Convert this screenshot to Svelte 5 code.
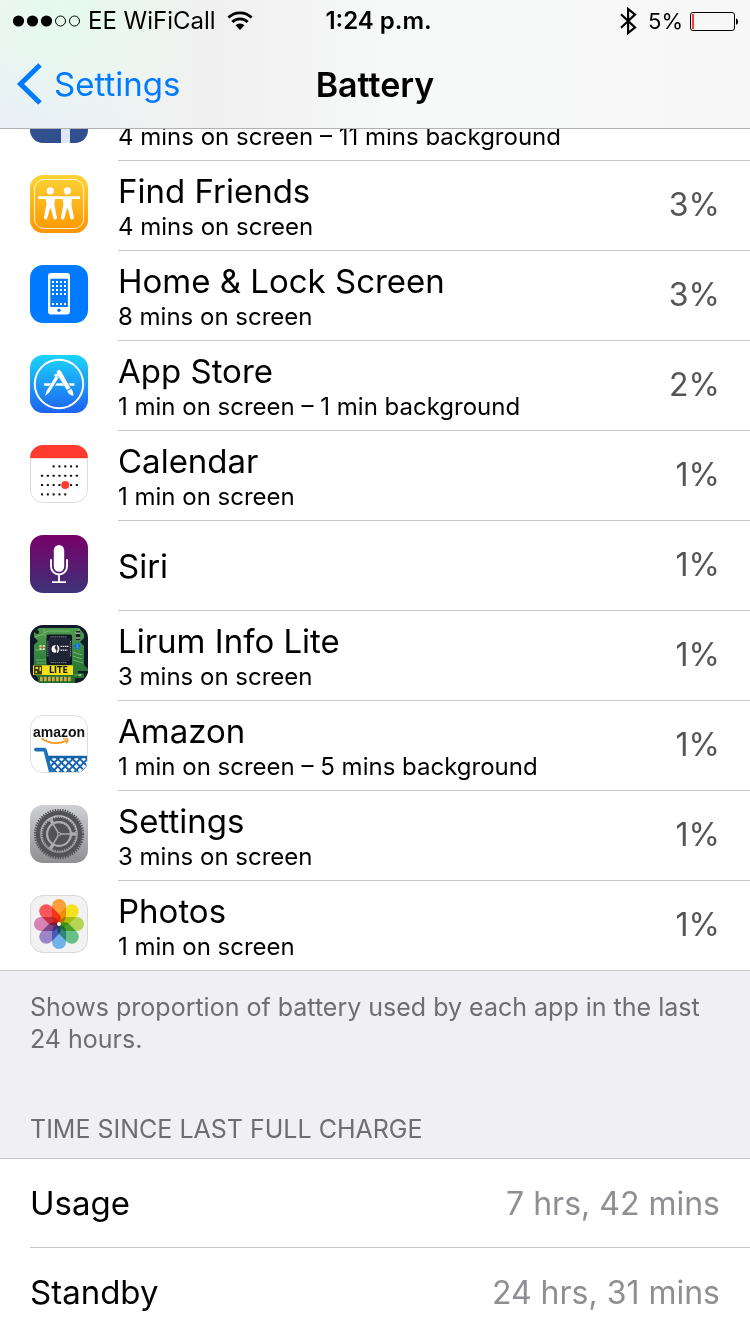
<script>
  const apps = [
    { id: 'facebook', name: '', detail: '4 mins on screen – 11 mins background', share: '' },
    { id: 'friends', name: 'Find Friends', detail: '4 mins on screen', share: '3%' },
    { id: 'home', name: 'Home & Lock Screen', detail: '8 mins on screen', share: '3%' },
    { id: 'store', name: 'App Store', detail: '1 min on screen – 1 min background', share: '2%' },
    { id: 'calendar', name: 'Calendar', detail: '1 min on screen', share: '1%' },
    { id: 'siri', name: 'Siri', detail: '', share: '1%' },
    { id: 'lirum', name: 'Lirum Info Lite', detail: '3 mins on screen', share: '1%' },
    { id: 'amazon', name: 'Amazon', detail: '1 min on screen – 5 mins background', share: '1%' },
    { id: 'settings', name: 'Settings', detail: '3 mins on screen', share: '1%' },
    { id: 'photos', name: 'Photos', detail: '1 min on screen', share: '1%' }
  ];

  const times = [
    { label: 'Usage', value: '7 hrs, 42 mins' },
    { label: 'Standby', value: '24 hrs, 31 mins' }
  ];

  const calendarX = [12, 17.8, 23.6, 29.4, 35.2, 41, 46.8];
  const calendarRows = [
    { y: 21.3, from: 2, to: 6 },
    { y: 30.7, from: 0, to: 6 },
    { y: 40, from: 0, to: 6 },
    { y: 49.3, from: 0, to: 4 }
  ];
  const calendarDots = calendarRows.flatMap((r) =>
    calendarX.slice(r.from, r.to + 1).map((x) => ({ x, y: r.y }))
  );

  const homeDots = [16, 20, 24, 28, 38].flatMap((y) => [22, 26, 30, 34].map((x) => ({ x, y })));

  const petals = ['#fa9f3a', '#f2e11c', '#b5d557', '#67bf85', '#70b1ea', '#9b86ca', '#d583b3', '#f7575a'];
</script>

<div class="screen">
  <header>
    <div class="status">
      <div class="carrier">
        <svg width="68" height="14" viewBox="0 0 68 14" aria-label="Signal strength">
          {#each [0, 1, 2, 3, 4] as i}
            <circle cx={6.5 + i * 14} cy="7" r={i < 3 ? 5.6 : 5} fill={i < 3 ? '#000' : 'none'} stroke={i < 3 ? 'none' : '#000'} />
          {/each}
        </svg>
        <span>EE WiFiCall</span>
        <svg class="wifi" width="26" height="20" viewBox="0 0 26 20" aria-label="Wi-Fi">
          <g fill="none" stroke="#000" stroke-width="2.8">
            <path d="M1.4 6.6A16.6 16.6 0 0 1 24.6 6.6" />
            <path d="M5.3 11A10.9 10.9 0 0 1 20.7 11" />
          </g>
          <path d="M8.5 14.3A6.4 6.4 0 0 1 17.5 14.3L13 18.9Z" />
        </svg>
      </div>
      <time>1:24 p.m.</time>
      <div class="power">
        <svg width="18" height="28" viewBox="0 0 18 28" aria-label="Bluetooth">
          <path d="M2 7.2L16 20.4L9.1 26V2L16 7.6L2 20.8" fill="none" stroke="#000" stroke-width="2.2" />
        </svg>
        <span>5%</span>
        <svg width="49" height="20" viewBox="0 0 49 20" aria-label="Battery level">
          <rect x="0.5" y="1.5" width="44" height="18" rx="2.5" fill="none" stroke="#000" />
          <rect x="2" y="3" width="2" height="15" fill="#ff3b30" />
          <path d="M46 7.2A3.6 3.6 0 0 1 46 13.8Z" />
        </svg>
      </div>
    </div>
    <nav>
      <a href="#settings">
        <svg width="26" height="42" viewBox="0 0 26 42" aria-hidden="true">
          <path d="M24 2L4.500 21L24 40" fill="none" stroke="#007aff" stroke-width="5" />
        </svg>
        <span>Settings</span>
      </a>
      <h1>Battery</h1>
    </nav>
  </header>

  <main>
    <ul class="apps">
      {#each apps as app}
        <li class:partial={!app.name}>
          <svg class="icon" viewBox="0 0 58 58" aria-hidden="true">
            <defs>
              <clipPath id="clip-{app.id}"><rect width="58" height="58" rx="13" /></clipPath>
            </defs>
            <g clip-path="url(#clip-{app.id})">
              {#if app.id === 'facebook'}
                <rect width="58" height="58" fill="#2f4f8f" />
                <path d="M31 58V34H24V26H31V20Q31 10 41 10H48V18H43Q40 18 40 21V26H48L47 34H40V58Z" fill="#dfe6f5" />
              {:else if app.id === 'friends'}
                <linearGradient id="g-friends" x2="0" y2="1">
                  <stop stop-color="#fbd436" /><stop offset="1" stop-color="#ff9500" />
                </linearGradient>
                <rect width="58" height="58" fill="url(#g-friends)" />
                <rect x="4.5" y="4.5" width="49" height="49" rx="9.5" fill="none" stroke="#fff" stroke-opacity=".8" />
                <rect x="8" y="21.2" width="42" height="2.8" rx="0.6" fill="#fff" />
                {#each [20.4, 37.4] as x}
                  <g transform="translate({x} 0)" fill="#fff">
                    <circle cy="15.8" r="3.6" />
                    <path d="M-5 22H5L3.9 29L6.5 42.6Q6.5 44.5 4.8 44.5Q3.4 44.5 3 43L0.5 33.5H-0.5L-3 43Q-3.4 44.5 -4.8 44.5Q-6.5 44.5 -6.5 42.6L-3.9 29Z" />
                  </g>
                {/each}
              {:else if app.id === 'home'}
                <rect width="58" height="58" fill="#007aff" />
                <rect x="18" y="8" width="22" height="41.4" rx="3" fill="#fff" />
                <rect x="20.3" y="13.7" width="17.6" height="28.3" fill="#007aff" />
                {#each homeDots as d}
                  <rect x={d.x} y={d.y} width="2" height="2" fill="#fff" />
                {/each}
                <circle cx="29" cy="45.2" r="1.7" fill="#007aff" />
              {:else if app.id === 'store'}
                <linearGradient id="g-store" x2="0" y2="1">
                  <stop stop-color="#1cd4fb" /><stop offset="1" stop-color="#1d62f0" />
                </linearGradient>
                <rect width="58" height="58" fill="url(#g-store)" />
                <circle cx="29" cy="29" r="24.2" fill="none" stroke="#fff" stroke-width="2" />
                <path d="M14 28.2H44.4V30.7H14Z" fill="#fff" />
                <path d="M29.5 19L18.5 37" stroke="#1f93f6" stroke-width="4.6" />
                <path d="M27.2 18.5L16.6 35.9L15 41L19.2 37.6L30.6 19.5Z" fill="#fff" />
                <path d="M24.9 20.2L28 22.2" stroke="#1fa9f8" stroke-width=".8" />
                <path d="M28.5 17.2L39.5 34.5" stroke="#1f93f6" stroke-width="5" />
                <path d="M26.8 16.2Q29 13.8 31 16.2L40.4 33L36.8 35.1L26.9 18.7Z" fill="#fff" />
                <path d="M37.3 36L41 33.8Q43.6 36 43.4 41Q38.5 39.7 37.3 36Z" fill="#fff" />
                <circle cx="26" cy="20.3" r="1.6" fill="#fff" />
              {:else if app.id === 'calendar'}
                <rect width="58" height="58" fill="#fff" />
                <rect width="58" height="13.2" fill="#ff3b30" />
                {#each calendarDots as d}
                  <rect x={d.x - 1} y={d.y - 1} width="2.1" height="2.1" rx="0.6" fill="#111" />
                {/each}
                <circle cx="35.2" cy="40.1" r="4" fill="#ff3b30" />
                <path d="M.5 13.2V45A12.5 12.5 0 0 0 13 57.5H45A12.5 12.5 0 0 0 57.5 45V13.2" fill="none" stroke="#dcdcdc" />
              {:else if app.id === 'siri'}
                <linearGradient id="g-siri" x2="0" y2="1">
                  <stop stop-color="#780068" /><stop offset="1" stop-color="#3d3379" />
                </linearGradient>
                <rect width="58" height="58" fill="url(#g-siri)" />
                <rect x="23.8" y="10" width="10.4" height="26.8" rx="5.2" fill="#fff" />
                <path d="M21 24.3V31.5A8 8 0 0 0 37 31.5V24.3M29 39.5V47M22 47.1H36" fill="none" stroke="#fff" stroke-width="1.9" />
              {:else if app.id === 'lirum'}
                <linearGradient id="g-lirum" x2="0" y2="1">
                  <stop stop-color="#4f9c50" /><stop offset="1" stop-color="#1c6b2b" />
                </linearGradient>
                <rect width="58" height="58" fill="#10182a" />
                <path d="M9 3H49L54 9V13L50 17L54 21V40L58 44V48H54V53H45V58H8V53L4 49V20L8 16L4 12V8Z" fill="url(#g-lirum)" />
                <g fill="none" stroke="#8cc77c" stroke-width=".7">
                  <path d="M5 12L14 9L17 13M5 25H12L15 22M6 35H16M7 38H17M14 4V8L18 6H40M43 27L52 30M43 31L52 34M43 35L53 38M45 8L50 4M44 50H52" />
                </g>
                <circle cx="7" cy="7" r="2" fill="#101c23" />
                <circle cx="50" cy="50" r="1.4" fill="#84bd71" />
                <rect x="16.5" y="9.5" width="25.5" height="30.5" rx="1.5" fill="#111725" />
                <rect x="19.2" y="14" width="20" height="21.5" fill="#1d2435" stroke="#343e50" stroke-width=".5" />
                <g stroke="#8b9197" stroke-width="1" stroke-dasharray="1.4 .6">
                  <path d="M20.5 11.900H37M20.5 37.600H37M17.900 16V32M40.700 16V32" />
                </g>
                <path d="M25.500 20.500A3.500 3.500 0 0 0 25 27.500Q27.500 26.500 25.300 24.500Q23.500 22.500 25.500 20.500Z" fill="#fff" stroke="#fff" stroke-width=".6" />
                <path d="M27.200 20Q31 23.500 27.200 28Q28.800 24 27.200 20Z" fill="#fff" stroke="#fff" stroke-width=".6" />
                <g stroke="#edf1f3" stroke-width="1.3" stroke-dasharray="1.6 .6">
                  <path d="M30.5 21.3H38.500M30.5 25.1H37.500" />
                </g>
                <rect x="46" y="6" width="4.2" height="9" rx=".6" fill="#172620" />
                <path d="M46 8.2H50.2M46 13H50.2" stroke="#e8ede6" />
                <circle cx="47.4" cy="21" r="2.9" fill="#1665bd" />
                <path d="M45 18.5L50 23.5M50 18.5L45 23.5M47.4 17.5V24.5" stroke="#39a8ff" stroke-width=".7" />
                <g fill="#d6dbbb"><rect x="9.5" y="20" width="2" height="5" /><rect x="12.8" y="20" width="2" height="5" /></g>
                <path d="M9.5 22.5H15" stroke="#a57a2c" />
                <rect x="48" y="46" width="10" height="2.4" fill="#10182a" />
                <rect x="3" y="40.3" width="40" height="9.7" fill="#f5df1b" />
                <path d="M4 40.5H12V49.5H4ZM5.5 42V44H8V42ZM9.5 42V46H11V42ZM5.5 46V48H7V46ZM8 47.5H11" fill="#3c3b10" fill-rule="evenodd" />
                <text x="19" y="48" class="lite">LITE</text>
                <path d="M10 54H41" stroke="#d5a744" stroke-width="4.6" stroke-dasharray="2.7 1.3" />
              {:else if app.id === 'amazon'}
                <rect width="58" height="58" fill="#fff" />
                <text x="29" y="22" text-anchor="middle" class="amazon">amazon</text>
                <path d="M11.5 23.500Q23 31.500 37 25.700" fill="none" stroke="#f79a1c" stroke-width="1.8" />
                <path d="M33 24.2Q38 23 38 24.500Q37.9 26.300 36.2 28.5" fill="none" stroke="#f79a1c" stroke-width="1.3" />
                <clipPath id="basket"><path d="M17 41H58V58H21.5Z" /></clipPath>
                <g clip-path="url(#basket)" stroke="#1464ad" stroke-width="1.9">
                  {#each [0, 1, 2, 3, 4, 5, 6, 7] as i}
                    <path d="M{8 + i * 7.4} 39L{28 + i * 7.4} 59M{18 + i * 7.4} 39L{-2 + i * 7.4} 59" />
                  {/each}
                </g>
                <path d="M17 42H58" stroke="#1464ad" stroke-width="2.6" />
                <path d="M5.8 34.6H14.2Q15 34.6 15.3 35.8L21.3 59" fill="none" stroke="#1b72b8" stroke-width="3.6" stroke-linecap="round" />
                <rect x=".5" y=".5" width="57" height="57" rx="12.5" fill="none" stroke="#dcdcdc" />
              {:else if app.id === 'settings'}
                <linearGradient id="g-settings" x2="0" y2="1">
                  <stop stop-color="#cfd0d3" /><stop offset="1" stop-color="#8e8e93" />
                </linearGradient>
                <rect width="58" height="58" fill="url(#g-settings)" />
                <g fill="none" stroke="#535355">
                  <circle cx="29" cy="29" r="21" stroke-width="4.4" />
                  <circle cx="29" cy="29" r="24" stroke-width="2.2" stroke-dasharray="1.4 1.113" />
                  <circle cx="29" cy="29" r="14.6" stroke-width="3.4" />
                  <circle cx="29" cy="29" r="16.8" stroke-width="1.4" stroke-dasharray="1.3 1.04" />
                </g>
                <circle cx="29" cy="29" r="11.2" fill="#535355" />
                <circle cx="29" cy="29" r="11.8" fill="none" stroke="#aaabae" stroke-width="2" />
                <g stroke="#aaabae" stroke-width="2">
                  {#each [0, 120, 240] as a}
                    <g transform="rotate({a} 29 29)">
                      <path d="M29 29H46" stroke-width="1.5" />
                      <path d="M40 29H46.5" stroke-width="3.4" />
                    </g>
                  {/each}
                </g>
                <circle cx="29" cy="29" r="2" fill="#aaabae" /><circle cx="29" cy="29" r=".9" fill="#535355" />
              {:else}
                <rect width="58" height="58" fill="#f2f2f2" />
                <g class="petals">
                  {#each petals as color, i}
                    <rect x="22" y="4" width="14" height="24.5" rx="7" fill={color} transform="rotate({i * 45} 29 29)" />
                  {/each}
                </g>
                <circle cx="29" cy="29" r="1.9" fill="#fff" />
                <rect x=".5" y=".5" width="57" height="57" rx="12.5" fill="none" stroke="#d8d8d8" />
              {/if}
            </g>
          </svg>
          <div class="entry">
            <div class="text">
              {#if app.name}<span class="name">{app.name}</span>{/if}
              {#if app.detail}<span class="detail">{app.detail}</span>{/if}
            </div>
            {#if app.share}<span class="share">{app.share}</span>{/if}
          </div>
        </li>
      {/each}
    </ul>

    <p class="note">Shows proportion of battery used by each app in the last 24 hours.</p>
    <h2>TIME SINCE LAST FULL CHARGE</h2>

    <dl>
      {#each times as t}
        <div><dt>{t.label}</dt><dd>{t.value}</dd></div>
      {/each}
    </dl>
  </main>
</div>

<style>
  :global(body) {
    background: #efeff4;
  }
  .screen {
    height: 100vh;
    overflow: hidden;
    font-family: Inter, 'Liberation Sans', sans-serif;
    color: #000;
  }
  header {
    box-sizing: border-box;
    height: 129px;
    border-bottom: 1px solid #b2b2b2;
    background:
      radial-gradient(circle at 8% 10%, #e6faed, #e6faed00 20%),
      radial-gradient(circle at 2% 100%, #e8edf8, #e8edf800 20%),
      linear-gradient(90deg, #f0f5f3, #f0f0f0 28%, #f8f9f9 55%, #f7f7f7);
  }
  .status {
    display: grid;
    grid-template-columns: 51fr auto 50fr;
    align-items: center;
    height: 41px;
    padding: 0 11px 0 12px;
    font-size: 24px;
  }
  .carrier,
  .power {
    display: flex;
    align-items: center;
  }
  .carrier {
    gap: 8px;
  }
  .wifi {
    margin-left: 3px;
  }
  .power {
    justify-content: flex-end;
    gap: 7px;
  }
  .power span {
    margin-left: 4px;
    font-size: 22px;
  }
  time {
    font-weight: 600;
  }
  nav {
    display: grid;
    grid-template-columns: 1fr auto 1fr;
    align-items: center;
    height: 86px;
    padding: 0 16px;
  }
  a {
    display: flex;
    align-items: center;
    gap: 12px;
    color: #007aff;
    font-size: 33px;
    text-decoration: none;
  }
  h1 {
    margin: 0;
    font-size: 34px;
    font-weight: 600;
  }
  ul,
  dl {
    margin: 0;
    padding: 0;
    list-style: none;
    background: #fff;
    border-bottom: 1px solid #c8c7cc;
  }
  li {
    display: flex;
    gap: 30px;
    padding-left: 30px;
  }
  .icon {
    flex: none;
    width: 58px;
    height: 58px;
    margin: 14px 0 18px;
  }
  .entry {
    flex: 1;
    display: flex;
    align-items: center;
    justify-content: space-between;
    box-sizing: border-box;
    height: 90px;
    padding-right: 30px;
    border-bottom: 1px solid #c8c7cc;
  }
  /* A row scrolled mostly out of view shows its lower edge only. */
  .partial {
    align-items: flex-end;
    height: 32px;
    overflow: hidden;
  }
  .partial .entry {
    align-items: flex-end;
    height: 32px;
    padding-bottom: 8px;
  }
  li:last-child,
  li:last-child .entry {
    height: 89px;
    border-bottom: 0;
  }
  .text {
    display: flex;
    flex-direction: column;
  }
  .name {
    font-size: 33px;
    line-height: 42px;
  }
  .detail {
    font-size: 24px;
    line-height: 30px;
  }
  .share {
    padding-bottom: 2px;
    font-size: 32px;
    color: #555;
  }
  .note {
    margin: 0;
    padding: 20px 30px 0;
    font-size: 25px;
    line-height: 32px;
    color: #6d6d72;
  }
  h2 {
    margin: 0;
    padding: 58px 30px 13px;
    font-size: 25px;
    font-weight: 400;
    line-height: 32px;
    color: #6d6d72;
    border-bottom: 1px solid #c8c7cc;
  }
  dl div {
    display: flex;
    align-items: center;
    justify-content: space-between;
    height: 88px;
    margin-left: 30px;
    padding-right: 30px;
    font-size: 33px;
  }
  dl div + div {
    border-top: 1px solid #c8c7cc;
  }
  dd {
    margin: 0;
    font-size: 32px;
    color: #8e8e93;
  }
  .lite {
    font: 700 8px 'DejaVu Sans', sans-serif;
    fill: #151812;
  }
  .amazon {
    font: 700 14px 'Liberation Sans', sans-serif;
    fill: #111;
  }
  .petals {
    isolation: isolate;
  }
  .petals rect {
    mix-blend-mode: multiply;
  }
</style>
